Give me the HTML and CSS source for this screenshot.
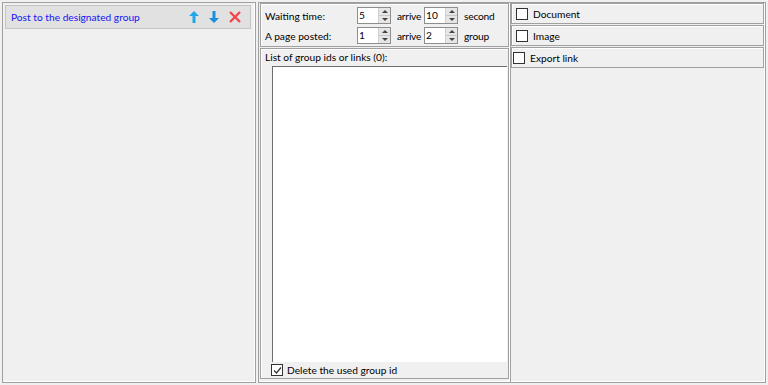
FILE: index.html
```html
<!DOCTYPE html>
<html lang="en">
<head>
    <meta charset="UTF-8">
    <title>Post to group</title>
    <link rel="stylesheet" href="styles.css">
</head>
<body>
    <div class="page">
        <!-- Task list -->
        <div class="panel left-panel">
            <div class="task-item">
                <span class="task-name">Post to the designated group</span>
                <div class="task-actions">
                    <svg width="10" height="12" viewBox="0 0 10 12"><path d="M5 0 L10 5 L6.5 5 L6.5 12 L3.5 12 L3.5 5 L0 5 Z" fill="#1ea7ea"/></svg>
                    <svg width="10" height="12" viewBox="0 0 10 12"><path d="M5 12 L10 7 L6.5 7 L6.5 0 L3.5 0 L3.5 7 L0 7 Z" fill="#1a8fdc"/></svg>
                    <svg width="12" height="12" viewBox="0 0 12 12"><path d="M1 1 L11 11 M11 1 L1 11" stroke="#f0474a" stroke-width="2.4"/></svg>
                </div>
            </div>
        </div>

        <!-- Settings -->
        <div class="panel middle-panel">
            <div class="box settings">
                <div class="setting-row">
                    <span class="setting-label">Waiting time:</span>
                    <div class="spin"><span class="spin-value">5</span><span class="spin-btns"><i class="up"></i><i class="down"></i></span></div>
                    <span class="setting-word">arrive</span>
                    <div class="spin"><span class="spin-value">10</span><span class="spin-btns"><i class="up"></i><i class="down"></i></span></div>
                    <span class="setting-word">second</span>
                </div>
                <div class="setting-row">
                    <span class="setting-label">A page posted:</span>
                    <div class="spin"><span class="spin-value">1</span><span class="spin-btns"><i class="up"></i><i class="down"></i></span></div>
                    <span class="setting-word">arrive</span>
                    <div class="spin"><span class="spin-value">2</span><span class="spin-btns"><i class="up"></i><i class="down"></i></span></div>
                    <span class="setting-word">group</span>
                </div>
            </div>

            <div class="box group-list">
                <div class="list-title">List of group ids or links (0):</div>
                <div class="list-area"></div>
                <label class="check-row">
                    <span class="checkbox checked">
                        <svg width="9" height="9" viewBox="0 0 9 9"><path d="M1 4.5 L3.5 7 L8 1.5" stroke="#333" stroke-width="1.2" fill="none"/></svg>
                    </span>
                    Delete the used group id
                </label>
            </div>
        </div>

        <!-- Options -->
        <div class="panel right-panel">
            <div class="box option"><span class="checkbox"></span>Document</div>
            <div class="box option"><span class="checkbox"></span>Image</div>
            <div class="box option"><span class="checkbox"></span>Export link</div>
        </div>
    </div>
</body>
</html>
```

FILE: styles.css
```css
body {
    margin: 0;
    padding: 0;
    background-color: #f0f0f0;
    font-family: Lato, "Liberation Sans", sans-serif;
    font-size: 10.2px;
    color: #000;
}

.page {
    display: flex;
    padding: 2px;
    height: 385px;
    box-sizing: border-box;
}

.panel {
    border: 1px solid #a0a0a0;
    box-shadow: inset -1px -1px 0 #fff;
    background-color: #f0f0f0;
    box-sizing: border-box;
    height: 381px;
}

.left-panel {
    width: 254px;
    padding: 2px;
    margin-right: 2px;
}

.middle-panel {
    width: 253px;
    padding: 0 1px;
    display: flex;
    flex-direction: column;
    gap: 1px;
}

.right-panel {
    flex: 1;
    padding: 0 1px 0 0;
    border-left: none;
    display: flex;
    flex-direction: column;
    gap: 1px;
}

.box {
    border: 1px solid #a0a0a0;
    box-shadow: inset 1px 1px 0 #fff;
    box-sizing: border-box;
}

/* Task list */
.task-item {
    display: flex;
    align-items: center;
    justify-content: space-between;
    height: 24px;
    width: 246px;
    padding: 0 9px 0 5px;
    box-sizing: border-box;
    background-color: #e1e1e1;
    border: 1px solid #c4c4c4;
}

.task-name {
    color: #1515f5;
}

.task-actions {
    display: flex;
    align-items: center;
    gap: 10px;
}

/* Settings */
.settings {
    height: 44px;
    padding: 3px 0 0 4px;
    display: flex;
    flex-direction: column;
    gap: 3px;
}

.setting-row {
    display: flex;
    align-items: center;
    height: 17px;
}

.setting-label {
    width: 92px;
}

.setting-word {
    width: 27px;
    padding-left: 6px;
    letter-spacing: -0.2px;
}

.spin {
    display: flex;
    width: 34px;
    height: 17px;
    border: 1px solid #8e8e8e;
    background-color: #fff;
    box-sizing: border-box;
}

.spin-value {
    flex: 1;
    padding-left: 1px;
    line-height: 15px;
}

.spin-btns {
    width: 11px;
    display: flex;
    flex-direction: column;
    border-left: 1px solid #d0d0d0;
    background-color: #e6e6e6;
}

.spin-btns i {
    flex: 1;
    display: flex;
    align-items: center;
    justify-content: center;
}

.spin-btns i.up {
    border-bottom: 1px solid #c8c8c8;
}

.spin-btns i::before {
    content: "";
    border-left: 3px solid transparent;
    border-right: 3px solid transparent;
}

.spin-btns i.up::before {
    border-bottom: 3px solid #444;
}

.spin-btns i.down::before {
    border-top: 3px solid #444;
}

/* Group list */
.group-list {
    flex: 1;
    display: flex;
    flex-direction: column;
    padding: 0 1px 0 11px;
    margin-bottom: 3px;
}

.list-title {
    height: 17px;
    line-height: 16px;
    margin-left: -7px;
}

.list-area {
    flex: 1;
    background-color: #fff;
    border-left: 1px solid #6e6e6e;
    border-top: 1px solid #6e6e6e;
}

.check-row {
    display: flex;
    align-items: center;
    gap: 4px;
    height: 16px;
    margin-left: -1px;
}

.checkbox {
    display: inline-flex;
    align-items: center;
    justify-content: center;
    width: 12px;
    height: 12px;
    border: 1px solid #333;
    background-color: #fff;
    box-sizing: border-box;
    flex-shrink: 0;
}

/* Options */
.option {
    height: 21px;
    display: flex;
    align-items: center;
    gap: 5px;
    padding-left: 4px;
}

.option:last-child {
    padding-left: 1px;
}
```
